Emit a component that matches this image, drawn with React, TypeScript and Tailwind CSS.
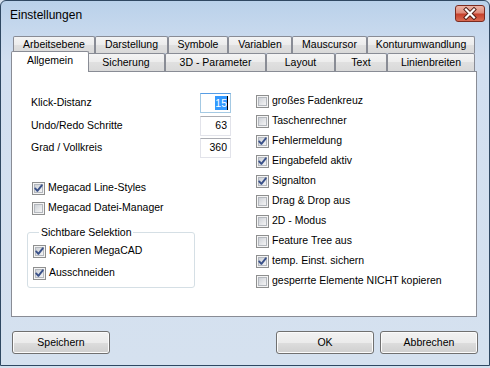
import React from "react";

const row1 = [
  { label: "Arbeitsebene", w: "w-[82px]" },
  { label: "Darstellung", w: "w-[73px]" },
  { label: "Symbole", w: "w-[60px]" },
  { label: "Variablen", w: "w-[64px]" },
  { label: "Mauscursor", w: "w-[75px]" },
  { label: "Konturumwandlung", w: "w-[108px]" },
];

const row2 = [
  { label: "Allgemein", w: "w-[78px]", selected: true },
  { label: "Sicherung", w: "w-[78px]" },
  { label: "3D - Parameter", w: "w-[101px]" },
  { label: "Layout", w: "w-[69px]" },
  { label: "Text", w: "w-[52px]" },
  { label: "Linienbreiten", w: "w-[88px]" },
];

const rightOptions = [
  { label: "großes Fadenkreuz", checked: false },
  { label: "Taschenrechner", checked: false },
  { label: "Fehlermeldung", checked: true },
  { label: "Eingabefeld aktiv", checked: true },
  { label: "Signalton", checked: true },
  { label: "Drag & Drop aus", checked: false },
  { label: "2D - Modus", checked: false },
  { label: "Feature Tree aus", checked: false },
  { label: "temp. Einst. sichern", checked: true },
  { label: "gesperrte Elemente NICHT kopieren", checked: false },
];

const tabBg =
  "bg-[linear-gradient(180deg,#f4f4f4_0%,#ececec_50%,#e0e0e0_50%,#d9d9d9_100%)]";

function Tab({ label, w, selected }: { label: string; w: string; selected?: boolean }) {
  if (selected) {
    return (
      <div
        className={`relative z-10 -mx-[2px] -mt-[2px] -mb-[1px] h-[21px] ${w} flex shrink-0 items-center justify-center rounded-t-[2px] border border-b-0 border-[#898c95] bg-white pb-[2px]`}
      >
        {label}
      </div>
    );
  }
  return (
    <div
      className={`h-full ${w} flex shrink-0 items-center justify-center rounded-t-[2px] border border-b-0 border-[#898c95] ${tabBg}`}
    >
      {label}
    </div>
  );
}

function CheckBox({ checked }: { checked: boolean }) {
  return (
    <svg width="13" height="13" viewBox="0 0 13 13" className="shrink-0">
      <defs>
        <linearGradient id="cbIn" x1="0" y1="0" x2="1" y2="1">
          <stop offset="0" stopColor="#cbcfd5" />
          <stop offset="1" stopColor="#f7f7f7" />
        </linearGradient>
      </defs>
      <rect x="0.5" y="0.5" width="12" height="12" fill="#f4f4f4" stroke="#8e8f8f" />
      <rect x="2.5" y="2.5" width="8" height="8" fill="url(#cbIn)" stroke="#b4b8be" />
      {checked && (
        <path
          d="M3.2 6.4 L5.4 8.9 L9.8 3.3"
          fill="none"
          stroke="#3a5189"
          strokeWidth="1.9"
          strokeLinecap="round"
          strokeLinejoin="round"
        />
      )}
    </svg>
  );
}

function Option({ label, checked }: { label: string; checked: boolean }) {
  return (
    <div className="flex h-[20px] items-center gap-[3px]">
      <CheckBox checked={checked} />
      <span>{label}</span>
    </div>
  );
}

function Field({ label, value, focused, className }: { label: string; value: string; focused?: boolean; className?: string }) {
  return (
    <div className={`flex h-[20px] w-[200px] items-center justify-between ${className ?? ""}`}>
      <span>{label}</span>
      <div
        className={`flex h-[20px] w-[31px] items-center justify-end bg-white ${
          focused
            ? "border border-[#a4c9e3] border-t-[#569de5] pr-[2px]"
            : "border border-[#e2e3ea] border-t-[#abadb3] pr-[3px]"
        }`}
      >
        {focused ? (
          <>
            <span className="bg-[#3399ff] text-white leading-[14px]">{value}</span>
            <span className="h-[14px] w-px bg-black" />
          </>
        ) : (
          <span>{value}</span>
        )}
      </div>
    </div>
  );
}

function Button({ label }: { label: string }) {
  return (
    <div className="flex h-[23px] w-[98px] items-center justify-center rounded-[3px] border border-[#707070] bg-[linear-gradient(180deg,#f2f2f2_0%,#ebebeb_50%,#dddddd_50%,#cfcfcf_100%)] shadow-[inset_0_0_0_1px_#fbfbfb]">
      {label}
    </div>
  );
}

export default function App() {
  return (
    <div className="h-[368px] w-[490px] bg-[#d5e1ef] font-['Liberation_Sans',Arial,sans-serif] text-[10.5px] text-black">
      <div className="h-[366px] w-[490px] rounded-t-[6px] border border-[#2f4862] bg-[linear-gradient(180deg,#b9d1ea_0px,#c6d8ed_28px,#d2dff0_60px,#d5e1ef_100%)]">
        {/* title bar */}
        <div className="flex h-[29px] items-start justify-between">
          <div className="pl-[9px] pt-[6px] text-[12px] leading-[16px]">Einstellungen</div>
          <div className="mr-[4px] mt-[4px] h-[17px] w-[30px] rounded-[3px] border border-[#7b2b20] bg-[linear-gradient(180deg,#ecb4a6_0%,#df8c7c_45%,#c6412d_55%,#d96b52_100%)]">
            <svg width="28" height="15" viewBox="0 0 28 15">
              <path d="M10 3.5 L18 11.5 M18 3.5 L10 11.5" stroke="#4d1a12" strokeWidth="4" strokeLinecap="square" />
              <path d="M10 3.5 L18 11.5 M18 3.5 L10 11.5" stroke="#ffffff" strokeWidth="2.2" strokeLinecap="square" />
            </svg>
          </div>
        </div>

        {/* tab control */}
        <div className="ml-[10px] mt-[6px] w-[466px]">
          <div className="flex h-[17px] pl-[2px]">
            {row1.map((t) => (
              <Tab key={t.label} label={t.label} w={t.w} />
            ))}
          </div>
          <div className="flex h-[18px] pl-[2px]">
            {row2.map((t) => (
              <Tab key={t.label} label={t.label} w={t.w} selected={t.selected} />
            ))}
          </div>
          <div className="flex h-[246px] border border-[#898c95] bg-white">
            {/* left column */}
            <div className="w-[233px] pl-[19px] pt-[21px]">
              <Field label="Klick-Distanz" value="15" focused />
              <Field label="Undo/Redo Schritte" value="63" className="mt-[3px]" />
              <Field label="Grad / Vollkreis" value="360" className="mt-[2px]" />

              <div className="ml-[1px] mt-[20px]">
                <Option label="Megacad Line-Styles" checked />
                <Option label="Megacad Datei-Manager" checked={false} />
              </div>

              <fieldset className="-ml-[4px] mt-[8px] w-[168px] rounded-[3px] border border-[#d5dfe5] pb-[4px] pl-[5px]">
                <legend className="ml-[6px] px-[2px] leading-[13px]">Sichtbare Selektion</legend>
                <div className="mt-[2px]">
                  <Option label="Kopieren MegaCAD" checked />
                </div>
                <div className="mt-[2px]">
                  <Option label="Ausschneiden" checked />
                </div>
              </fieldset>
            </div>

            {/* right column */}
            <div className="pl-[11px] pt-[19px]">
              {rightOptions.map((o) => (
                <Option key={o.label} label={o.label} checked={o.checked} />
              ))}
            </div>
          </div>
        </div>

        {/* buttons */}
        <div className="ml-[11px] mt-[14px] flex w-[466px] items-center">
          <Button label="Speichern" />
          <div className="flex-1" />
          <div className="flex gap-[6px]">
            <Button label="OK" />
            <Button label="Abbrechen" />
          </div>
        </div>
      </div>
    </div>
  );
}
